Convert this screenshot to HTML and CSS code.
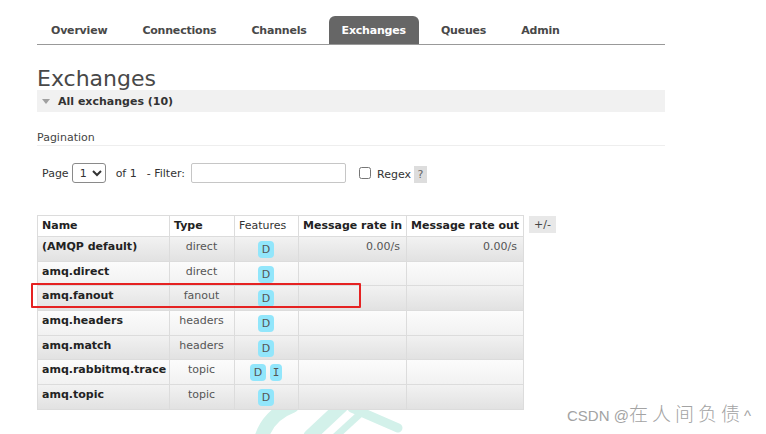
FILE: index.html
```html
<!DOCTYPE html>
<html lang="en">
<head>
<meta charset="utf-8">
<title>Exchanges</title>
<link rel="stylesheet" href="styles.css">
</head>
<body>
<div class="page">
  <svg class="bg-logo" width="170" height="34" viewBox="0 0 170 34">
    <path d="M10 34 C14 22 24 10 40 4" stroke="#d3f1ea" stroke-width="14" fill="none" stroke-linecap="round"/>
    <path d="M58 34 L90 4" stroke="#d3f1ea" stroke-width="13" fill="none" stroke-linecap="round"/>
    <path d="M100 6 L146 26" stroke="#d3f1ea" stroke-width="9" fill="none" stroke-linecap="round"/>
    <path d="M84 34 L108 12" stroke="#d3f1ea" stroke-width="7" fill="none" stroke-linecap="round"/>
  </svg>

  <nav class="tabs">
    <span class="tab">Overview</span>
    <span class="tab">Connections</span>
    <span class="tab">Channels</span>
    <span class="tab active">Exchanges</span>
    <span class="tab">Queues</span>
    <span class="tab">Admin</span>
  </nav>

  <h1 class="title">Exchanges</h1>

  <div class="section-head"><span class="tri"></span>All exchanges (10)</div>

  <div class="pag-label">Pagination</div>

  <div class="filter-row">
    <span class="lbl-page">Page</span>
    <select class="page-select"><option>1</option></select>
    <span class="lbl-of">of 1</span>
    <span class="lbl-filter">- Filter:</span>
    <input class="filter-input" type="text">
    <input class="regex-box" type="checkbox">
    <span class="lbl-regex">Regex</span>
    <span class="help">?</span>
  </div>

  <div class="table-wrap">
    <table class="list">
      <colgroup>
        <col class="c-name"><col class="c-type"><col class="c-feat"><col class="c-in"><col class="c-out">
      </colgroup>
      <thead>
        <tr>
          <th>Name</th><th>Type</th><th class="plain">Features</th><th>Message rate in</th><th>Message rate out</th>
        </tr>
      </thead>
      <tbody>
        <tr class="alt1"><td class="name">(AMQP default)</td><td class="type">direct</td><td class="feat"><span class="badge">D</span></td><td class="rate">0.00/s</td><td class="rate">0.00/s</td></tr>
        <tr class="alt2"><td class="name">amq.direct</td><td class="type">direct</td><td class="feat"><span class="badge">D</span></td><td></td><td></td></tr>
        <tr class="alt1"><td class="name">amq.fanout</td><td class="type">fanout</td><td class="feat"><span class="badge">D</span></td><td></td><td></td></tr>
        <tr class="alt2"><td class="name">amq.headers</td><td class="type">headers</td><td class="feat"><span class="badge">D</span></td><td></td><td></td></tr>
        <tr class="alt1"><td class="name">amq.match</td><td class="type">headers</td><td class="feat"><span class="badge">D</span></td><td></td><td></td></tr>
        <tr class="alt2"><td class="name">amq.rabbitmq.trace</td><td class="type">topic</td><td class="feat"><span class="badge">D</span> <span class="badge badge-i">I</span></td><td></td><td></td></tr>
        <tr class="alt1"><td class="name">amq.topic</td><td class="type">topic</td><td class="feat"><span class="badge">D</span></td><td></td><td></td></tr>
      </tbody>
    </table>
    <span class="plusminus">+/-</span>
  </div>

  <div class="highlight"></div>

  <div class="watermark">CSDN @<span class="cjk">在人间负债</span>^</div>
</div>
</body>
</html>
```

FILE: styles.css
```css
* { box-sizing: border-box; }

html, body {
  margin: 0;
  background: #fff;
}

body {
  font-family: "DejaVu Sans", Verdana, sans-serif;
  font-size: 11px;
  color: #333;
}

.page {
  position: relative;
  width: 766px;
  height: 434px;
  padding: 16px 0 0 37px;
  overflow: hidden;
}

.bg-logo {
  position: absolute;
  left: 252px;
  top: 402px;
}

.tabs {
  position: relative;
  display: flex;
  width: 628px;
  height: 29px;
  padding-left: 1px;
  border-bottom: 1px solid #999;
}

.tab {
  padding: 2px 13px 0;
  margin-right: 9px;
  line-height: 26px;
  font-weight: bold;
  letter-spacing: -0.2px;
  color: #484848;
  border-radius: 6px 6px 0 0;
}

.tab.active {
  background: #666;
  color: #fff;
}

.title {
  position: relative;
  margin: 21px 0 0;
  padding-top: 2px;
  font-size: 22px;
  line-height: 22px;
  font-weight: normal;
  color: #484848;
}

.section-head {
  position: relative;
  display: flex;
  align-items: center;
  width: 628px;
  height: 22px;
  margin-top: 0;
  padding-left: 5px;
  background: #f1f1f1;
  font-weight: bold;
  color: #333;
}

.tri {
  width: 0;
  height: 0;
  border-left: 4.5px solid transparent;
  border-right: 4.5px solid transparent;
  border-top: 5px solid #a0a0a0;
  margin-right: 8px;
}

.pag-label {
  position: relative;
  width: 628px;
  margin-top: 19px;
  line-height: 14px;
  padding-bottom: 0;
  border-bottom: 1px solid #eee;
  color: #444;
}

.filter-row {
  position: relative;
  display: flex;
  align-items: center;
  height: 20px;
  margin-top: 17px;
  padding-left: 5px;
  color: #333;
}

.page-select {
  width: 34px;
  height: 20px;
  margin-left: 3px;
  font-family: "DejaVu Sans", Verdana, sans-serif;
  font-size: 11px;
  color: #333;
  border: 1px solid #8a8a8a;
  border-radius: 3px;
  background: #fff;
  padding: 0 0 0 3px;
}

.lbl-of { margin-left: 10px; }
.lbl-filter { margin-left: 10px; }

.filter-input {
  width: 155px;
  height: 20px;
  margin: 0 0 0 6px;
  border: 1px solid #c6c6c6;
  border-radius: 2px;
  padding: 0 3px;
  font-size: 11px;
}

.regex-box {
  width: 12px;
  height: 12px;
  margin: 0 0 0 13px;
}

.lbl-regex { margin-left: 6px; margin-top: 2px; }

.help {
  display: inline-block;
  width: 13px;
  height: 17px;
  margin-left: 3px;
  margin-top: 3px;
  background: #ddd;
  color: #666;
  text-align: center;
  line-height: 17px;
}

.table-wrap {
  position: relative;
  display: flex;
  align-items: flex-start;
  margin-top: 32px;
}

.list {
  border-collapse: collapse;
  table-layout: fixed;
  width: 486px;
}

.c-name { width: 132px; }
.c-type { width: 65px; }
.c-feat { width: 64px; }
.c-in { width: 108px; }
.c-out { width: 117px; }

.list th,
.list td {
  border: 1px solid #dcdcdc;
  padding: 3px 5px 0 4px;
  vertical-align: top;
  line-height: 14px;
  white-space: nowrap;
}

.list thead tr { height: 21px; }

.list th {
  background: #fff;
  text-align: left;
  font-weight: bold;
  color: #222;
}

.list th.plain { font-weight: normal; color: #333; }

.list tbody tr { height: 24.7px; }

.alt1 { background: linear-gradient(#f2f2f2, #e1e1e1); }
.alt2 { background: linear-gradient(#fcfcfc, #f1f1f1); }

.list td.name { font-weight: bold; color: #222; }
.list td.type { text-align: center; color: #555; }
.list td.feat { text-align: center; }
.list td.rate { text-align: right; padding-right: 6px; color: #555; }

.badge {
  display: inline-block;
  padding: 2px 4px 1px;
  line-height: 14px;
  vertical-align: -3px;
  background: #92e6fb;
  color: #555;
  border-radius: 4px;
}

.badge-i {
  font-family: "DejaVu Sans Mono", monospace;
  padding: 2px 3px 1px;
}

.plusminus {
  display: inline-block;
  margin: 1px 0 0 5px;
  padding: 0 5px;
  height: 17px;
  line-height: 17px;
  background: #e8e8e8;
  color: #444;
}

.highlight {
  position: absolute;
  left: 31px;
  top: 283px;
  width: 330px;
  height: 25px;
  border: 2px solid #e52222;
  border-radius: 1px;
}

.watermark {
  position: absolute;
  left: 567px;
  top: 405px;
  font-family: "Liberation Sans", "Noto Sans CJK SC", sans-serif;
  font-size: 15px;
  color: #a3a3a3;
  white-space: nowrap;
}

.watermark .cjk {
  font-family: "Noto Sans CJK SC", sans-serif;
  font-size: 19px;
  font-weight: 300;
  letter-spacing: 4px;
  line-height: 15px;
}
```
